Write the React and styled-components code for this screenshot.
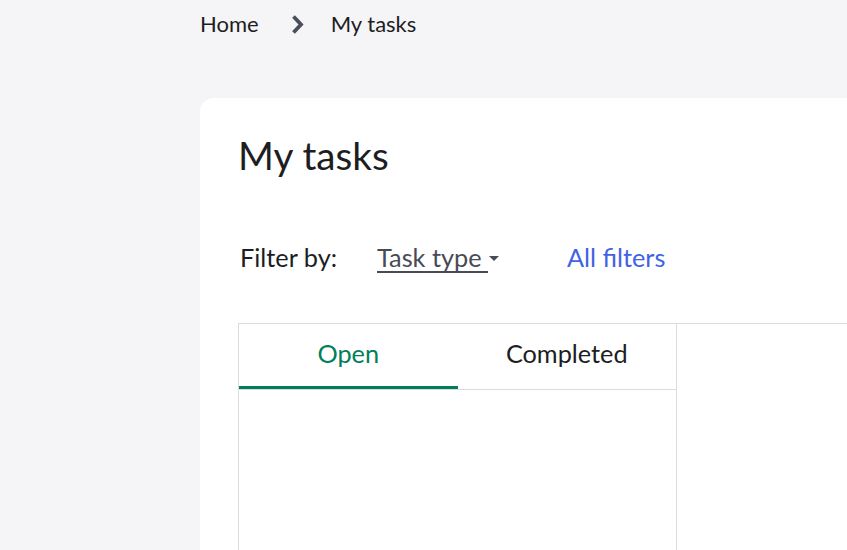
import React from 'react';
import styled, { createGlobalStyle } from 'styled-components';

const GlobalStyle = createGlobalStyle`
  html, body {
    margin: 0;
    padding: 0;
    background: #f5f5f7;
    font-family: Lato, "Noto Sans", sans-serif;
    color: #1d1d23;
    overflow: hidden;
  }
`

const Page = styled.div`
  width: 100vw;
  height: 100vh;
  padding-left: 200px;
  box-sizing: border-box;
  overflow: hidden;
`

const Breadcrumb = styled.nav`
  display: flex;
  align-items: center;
  height: 26px;
  padding-top: 11px;
  font-size: 22px;
  line-height: 26px;
`

const Crumb = styled.span`
  color: #1d1d23;
`

const Separator = styled.span`
  display: flex;
  align-items: center;
  margin: 0 27px 0 32px;
`

const Card = styled.section`
  margin-top: 61px;
  width: 1100px;
  min-height: 700px;
  background: #ffffff;
  border-radius: 14px 0 0 0;
  padding: 33px 0 0 38px;
  box-sizing: border-box;
`

const Title = styled.h1`
  margin: 0;
  font-size: 38.7px;
  line-height: 48px;
  font-weight: 400;
  color: #1d1d23;
`

const FilterRow = styled.div`
  display: flex;
  align-items: center;
  margin-top: 63px;
  height: 30px;
  font-size: 25.3px;
  line-height: 30px;
`

const FilterLabel = styled.span`
  margin-left: 2px;
  margin-right: 40px;
`

const Dropdown = styled.button`
  display: flex;
  align-items: center;
  border: 0;
  background: none;
  padding: 0;
  font: inherit;
  color: #474b57;
  cursor: pointer;
`

const Underlined = styled.span`
  text-decoration: underline;
  text-decoration-thickness: 2px;
  text-underline-offset: 4px;
  white-space: pre;
`

const Caret = styled.span`
  width: 0;
  height: 0;
  border-left: 5.5px solid transparent;
  border-right: 5.5px solid transparent;
  border-top: 5px solid #474b57;
  margin-left: 1px;
  margin-top: 3px;
`

const LinkButton = styled.a`
  margin-left: 68px;
  color: #3f63e6;
  text-decoration: none;
`

const Workspace = styled.div`
  display: flex;
  margin-top: 51px;
  border-top: 1px solid #dcdce0;
  min-height: 400px;
`

const ListPanel = styled.div`
  width: 437px;
  border-left: 1px solid #dcdce0;
  border-right: 1px solid #dcdce0;
`

const Tabs = styled.div`
  display: flex;
  border-bottom: 1px solid #dcdce0;
`

const Tab = styled.button`
  flex: 1;
  height: 65px;
  border: 0;
  border-bottom: 3px solid ${props => props.active ? '#00805a' : 'transparent'};
  background: none;
  padding: 0 0 4px;
  font: inherit;
  font-size: 25.3px;
  color: ${props => props.active ? '#00805a' : '#1d1d23'};
  cursor: pointer;
`

const DetailPanel = styled.div`
  flex: 1;
`

const Chevron = () => (
  <svg width="13" height="21" viewBox="0 0 13 21">
    <path d="M2.5 2.5 L10 10.5 L2.5 18.5" fill="none" stroke="#4a4e5b" strokeWidth="3.8" strokeLinejoin="miter" />
  </svg>
);

export default function App() {
  return (
    <Page>
      <GlobalStyle />
      <Breadcrumb>
        <Crumb>Home</Crumb>
        <Separator>
          <Chevron />
        </Separator>
        <Crumb>My tasks</Crumb>
      </Breadcrumb>
      <Card>
        <Title>My tasks</Title>
        <FilterRow>
          <FilterLabel>Filter by:</FilterLabel>
          <Dropdown>
            <Underlined>Task type </Underlined>
            <Caret />
          </Dropdown>
          <LinkButton href="#">All filters</LinkButton>
        </FilterRow>
        <Workspace>
          <ListPanel>
            <Tabs>
              <Tab active>Open</Tab>
              <Tab>Completed</Tab>
            </Tabs>
          </ListPanel>
          <DetailPanel />
        </Workspace>
      </Card>
    </Page>
  );
}
